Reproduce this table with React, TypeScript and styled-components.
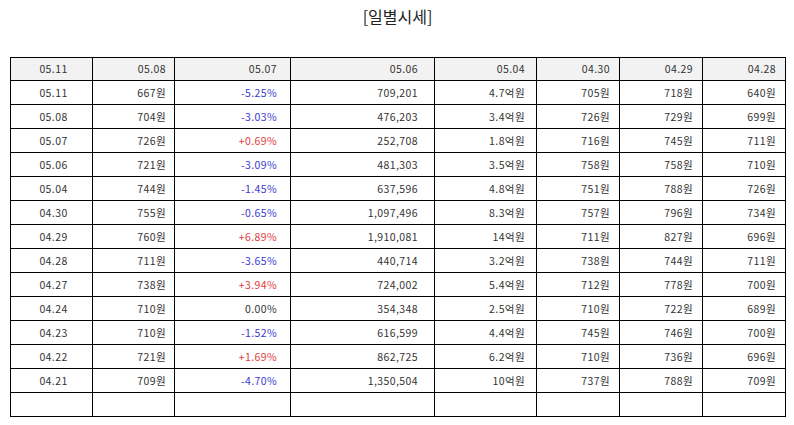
import React from "react";
import styled, { createGlobalStyle } from "styled-components";

const GlobalStyle = createGlobalStyle`
  html, body {
    margin: 0;
    padding: 0;
    background: #fff;
    font-family: "Noto Sans CJK KR", "Noto Sans", sans-serif;
  }
`;

const Page = styled.div`
  width: 794px;
  padding: 0 9px 0 10px;
  box-sizing: border-box;
`;

const Title = styled.h2`
  margin: 0;
  height: 57px;
  padding-top: 5px;
  box-sizing: border-box;
  text-align: center;
  font-size: 16px;
  font-weight: normal;
  color: #222;
  line-height: 22px;
`;

const Table = styled.table`
  width: 775px;
  border-collapse: collapse;
  table-layout: fixed;
  font-size: 10.5px;
  color: #333;
`;

const Cell = styled.td<{ $pad: number; $center?: boolean; $tone?: "up" | "down" }>`
  border: 1px solid #000;
  height: 23px;
  padding: 0 ${(p) => p.$pad}px 0 4px;
  text-align: ${(p) => (p.$center ? "center" : "right")};
  color: ${(p) => (p.$tone === "up" ? "#e03a3a" : p.$tone === "down" ? "#3a3ad0" : "#333")};
  letter-spacing: 0.4px;
  white-space: nowrap;
  line-height: 22px;
`;

const HeadCell = styled(Cell).attrs({ as: "th" })`
  height: 22px;
  background: #f2f2f2;
  font-weight: normal;
`;

const widths = [82, 82, 116, 144, 102, 83, 83, 83];
const pads = [0, 8, 13, 16, 11, 9, 9, 9];
const header = ["05.11", "05.08", "05.07", "05.06", "05.04", "04.30", "04.29", "04.28"];

const rows: string[][] = [
  ["05.11", "667원", "-5.25%", "709,201", "4.7억원", "705원", "718원", "640원"],
  ["05.08", "704원", "-3.03%", "476,203", "3.4억원", "726원", "729원", "699원"],
  ["05.07", "726원", "+0.69%", "252,708", "1.8억원", "716원", "745원", "711원"],
  ["05.06", "721원", "-3.09%", "481,303", "3.5억원", "758원", "758원", "710원"],
  ["05.04", "744원", "-1.45%", "637,596", "4.8억원", "751원", "788원", "726원"],
  ["04.30", "755원", "-0.65%", "1,097,496", "8.3억원", "757원", "796원", "734원"],
  ["04.29", "760원", "+6.89%", "1,910,081", "14억원", "711원", "827원", "696원"],
  ["04.28", "711원", "-3.65%", "440,714", "3.2억원", "738원", "744원", "711원"],
  ["04.27", "738원", "+3.94%", "724,002", "5.4억원", "712원", "778원", "700원"],
  ["04.24", "710원", "0.00%", "354,348", "2.5억원", "710원", "722원", "689원"],
  ["04.23", "710원", "-1.52%", "616,599", "4.4억원", "745원", "746원", "700원"],
  ["04.22", "721원", "+1.69%", "862,725", "6.2억원", "710원", "736원", "696원"],
  ["04.21", "709원", "-4.70%", "1,350,504", "10억원", "737원", "788원", "709원"],
  ["", "", "", "", "", "", "", ""],
];

const toneOf = (v: string) => (v.startsWith("+") ? "up" : v.startsWith("-") ? "down" : undefined);

export default function App() {
  return (
    <Page>
      <GlobalStyle />
      <Title>[일별시세]</Title>
      <Table>
        <colgroup>
          {widths.map((w, i) => (
            <col key={i} style={{ width: w }} />
          ))}
        </colgroup>
        <thead>
          <tr>
            {header.map((h, i) => (
              <HeadCell key={i} $pad={pads[i]} $center={i === 0}>
                {h}
              </HeadCell>
            ))}
          </tr>
        </thead>
        <tbody>
          {rows.map((r, ri) => (
            <tr key={ri}>
              {r.map((v, i) => (
                <Cell key={i} $pad={pads[i]} $center={i === 0} $tone={i === 2 ? toneOf(v) : undefined}>
                  {v}
                </Cell>
              ))}
            </tr>
          ))}
        </tbody>
      </Table>
    </Page>
  );
}
